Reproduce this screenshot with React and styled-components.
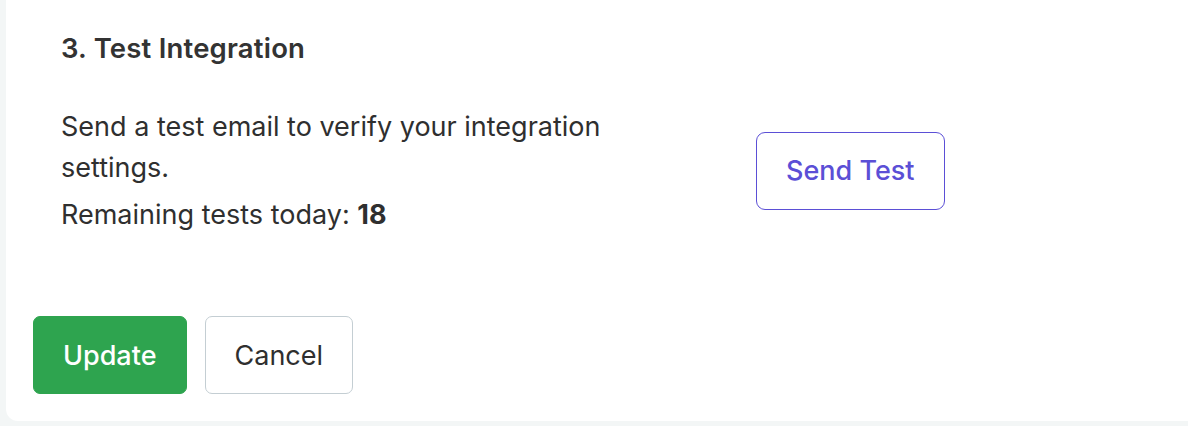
import React from "react";
import styled, { createGlobalStyle } from "styled-components";

const GlobalStyle = createGlobalStyle`
  html, body {
    margin: 0;
    padding: 0;
    background: #f3f6f6;
    font-family: Inter, "Noto Sans", sans-serif;
    color: #2f2f2f;
  }
`;

const Page = styled.div`
  width: 1188px;
  height: 426px;
  overflow: hidden;
  padding-left: 6px;
  box-sizing: border-box;
`;

const Card = styled.div`
  background: #ffffff;
  height: 421px;
  border-radius: 0 0 12px 12px;
  margin-right: -20px;
  display: flex;
  flex-direction: column;
  box-sizing: border-box;
  padding: 0 27px 27px;
`;

const Section = styled.section`
  padding: 30px 28px 0;
  flex: 1;
`;

const Title = styled.h3`
  margin: 0;
  font-size: 27.5px;
  font-weight: 600;
  letter-spacing: 0.2px;
  line-height: 36px;
  color: #333333;
`;

const Row = styled.div`
  display: grid;
  grid-template-columns: 695px auto;
  align-items: center;
  margin-top: 40px;
`;

const Description = styled.div`
  font-size: 27px;
  line-height: 41px;
  max-width: 620px;
`;

const Remaining = styled.p`
  margin: 6px 0 0;
  font-size: 27px;
  line-height: 41px;

  strong {
    font-weight: 700;
  }
`;

const Button = styled.button`
  font-family: inherit;
  font-size: 27px;
  font-weight: ${(p) => (p.$primary ? 500 : 400)};
  height: 78px;
  padding: 0 29px;
  border-radius: 7px;
  cursor: pointer;
  box-sizing: border-box;
  background: ${(p) => (p.$primary ? "#2ea44f" : "#fff")};
  color: ${(p) => (p.$primary ? "#fff" : "#2f2f2f")};
  border: 1px solid ${(p) => (p.$primary ? "#2ea44f" : "#c4ced3")};
`;

const OutlineButton = styled(Button)`
  color: #5b4fd6;
  border-color: #5b4fd6;
  font-weight: 500;
  border-radius: 9px;
`;

const Footer = styled.div`
  display: flex;
  gap: 18px;
`;

export default function App() {
  return (
    <>
      <GlobalStyle />
      <Page>
        <Card>
          <Section>
            <Title>3. Test Integration</Title>
            <Row>
              <div>
                <Description>
                  Send a test email to verify your integration settings.
                </Description>
                <Remaining>
                  Remaining tests today: <strong>18</strong>
                </Remaining>
              </div>
              <div>
                <OutlineButton>Send Test</OutlineButton>
              </div>
            </Row>
          </Section>
          <Footer>
            <Button $primary>Update</Button>
            <Button>Cancel</Button>
          </Footer>
        </Card>
      </Page>
    </>
  );
}
